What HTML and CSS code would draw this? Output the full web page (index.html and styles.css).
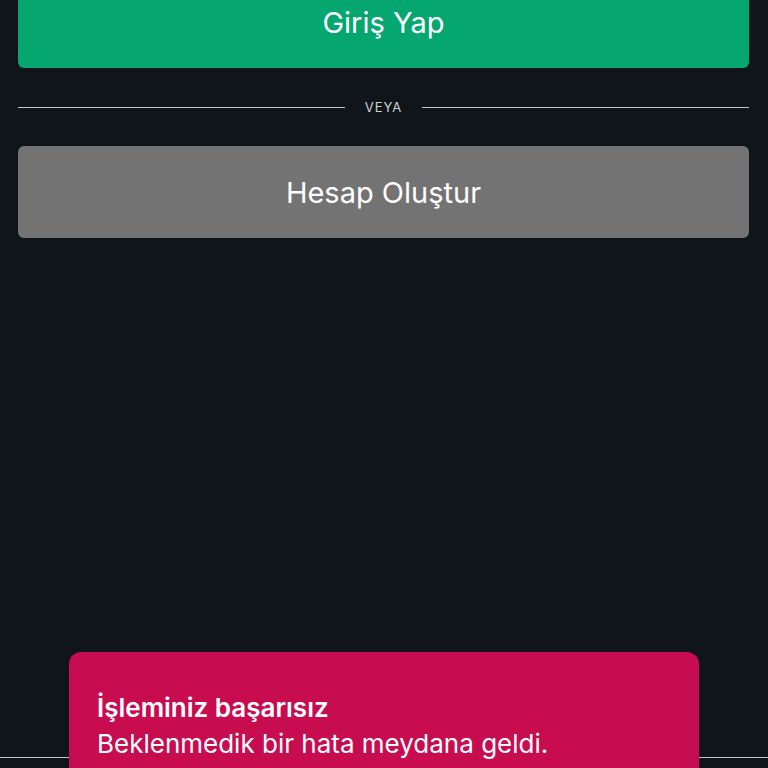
FILE: index.html
```html
<!DOCTYPE html>
<html lang="tr">
<head>
<meta charset="utf-8">
<title>Giriş</title>
<link rel="stylesheet" href="styles.css">
</head>
<body>
<div class="page">
  <main class="content">
    <button class="btn btn-primary">Giriş Yap</button>
    <div class="divider">
      <span class="divider-line"></span>
      <span class="divider-text">VEYA</span>
      <span class="divider-line"></span>
    </div>
    <button class="btn btn-secondary">Hesap Oluştur</button>
  </main>
  <footer class="footer"></footer>
</div>
<div class="toast">
  <div class="toast-title">İşleminiz başarısız</div>
  <div class="toast-message">Beklenmedik bir hata meydana geldi.</div>
</div>
</body>
</html>
```
FILE: styles.css
```css
html, body {
  margin: 0;
  padding: 0;
  background: #0f1519;
  font-family: Inter, "Noto Sans", sans-serif;
  overflow: hidden;
}
.page {
  display: flex;
  flex-direction: column;
  height: 768px;
}
.content {
  flex: 1;
  display: flex;
  flex-direction: column;
  padding: 0 19px 0 18px;
}
.btn {
  display: flex;
  align-items: center;
  justify-content: center;
  height: 92px;
  border: none;
  border-radius: 6px;
  color: #ffffff;
  font-family: inherit;
  font-size: 29px;
  font-weight: 400;
  padding: 0;
}
.btn-primary {
  margin-top: -24px;
  background: #05a66f;
}
.btn-secondary {
  background: #737373;
}
.divider {
  height: 78px;
  display: flex;
  align-items: center;
  gap: 20px;
}
.divider-line {
  flex: 1;
  height: 1px;
  background: #c4c6c8;
}
.divider-text {
  color: #d0d2d4;
  font-size: 13px;
  letter-spacing: 1px;
}
.footer {
  height: 10px;
  border-top: 1px solid #c4c6c8;
}
.toast {
  position: absolute;
  left: 69px;
  top: 652px;
  width: 630px;
  height: 140px;
  box-sizing: border-box;
  padding: 38px 28px 0;
  background: #c80c50;
  border-radius: 12px;
  color: #ffffff;
}
.toast-title {
  font-size: 26px;
  font-weight: 600;
  line-height: 36px;
}
.toast-message {
  font-size: 26px;
  line-height: 36px;
}
```
